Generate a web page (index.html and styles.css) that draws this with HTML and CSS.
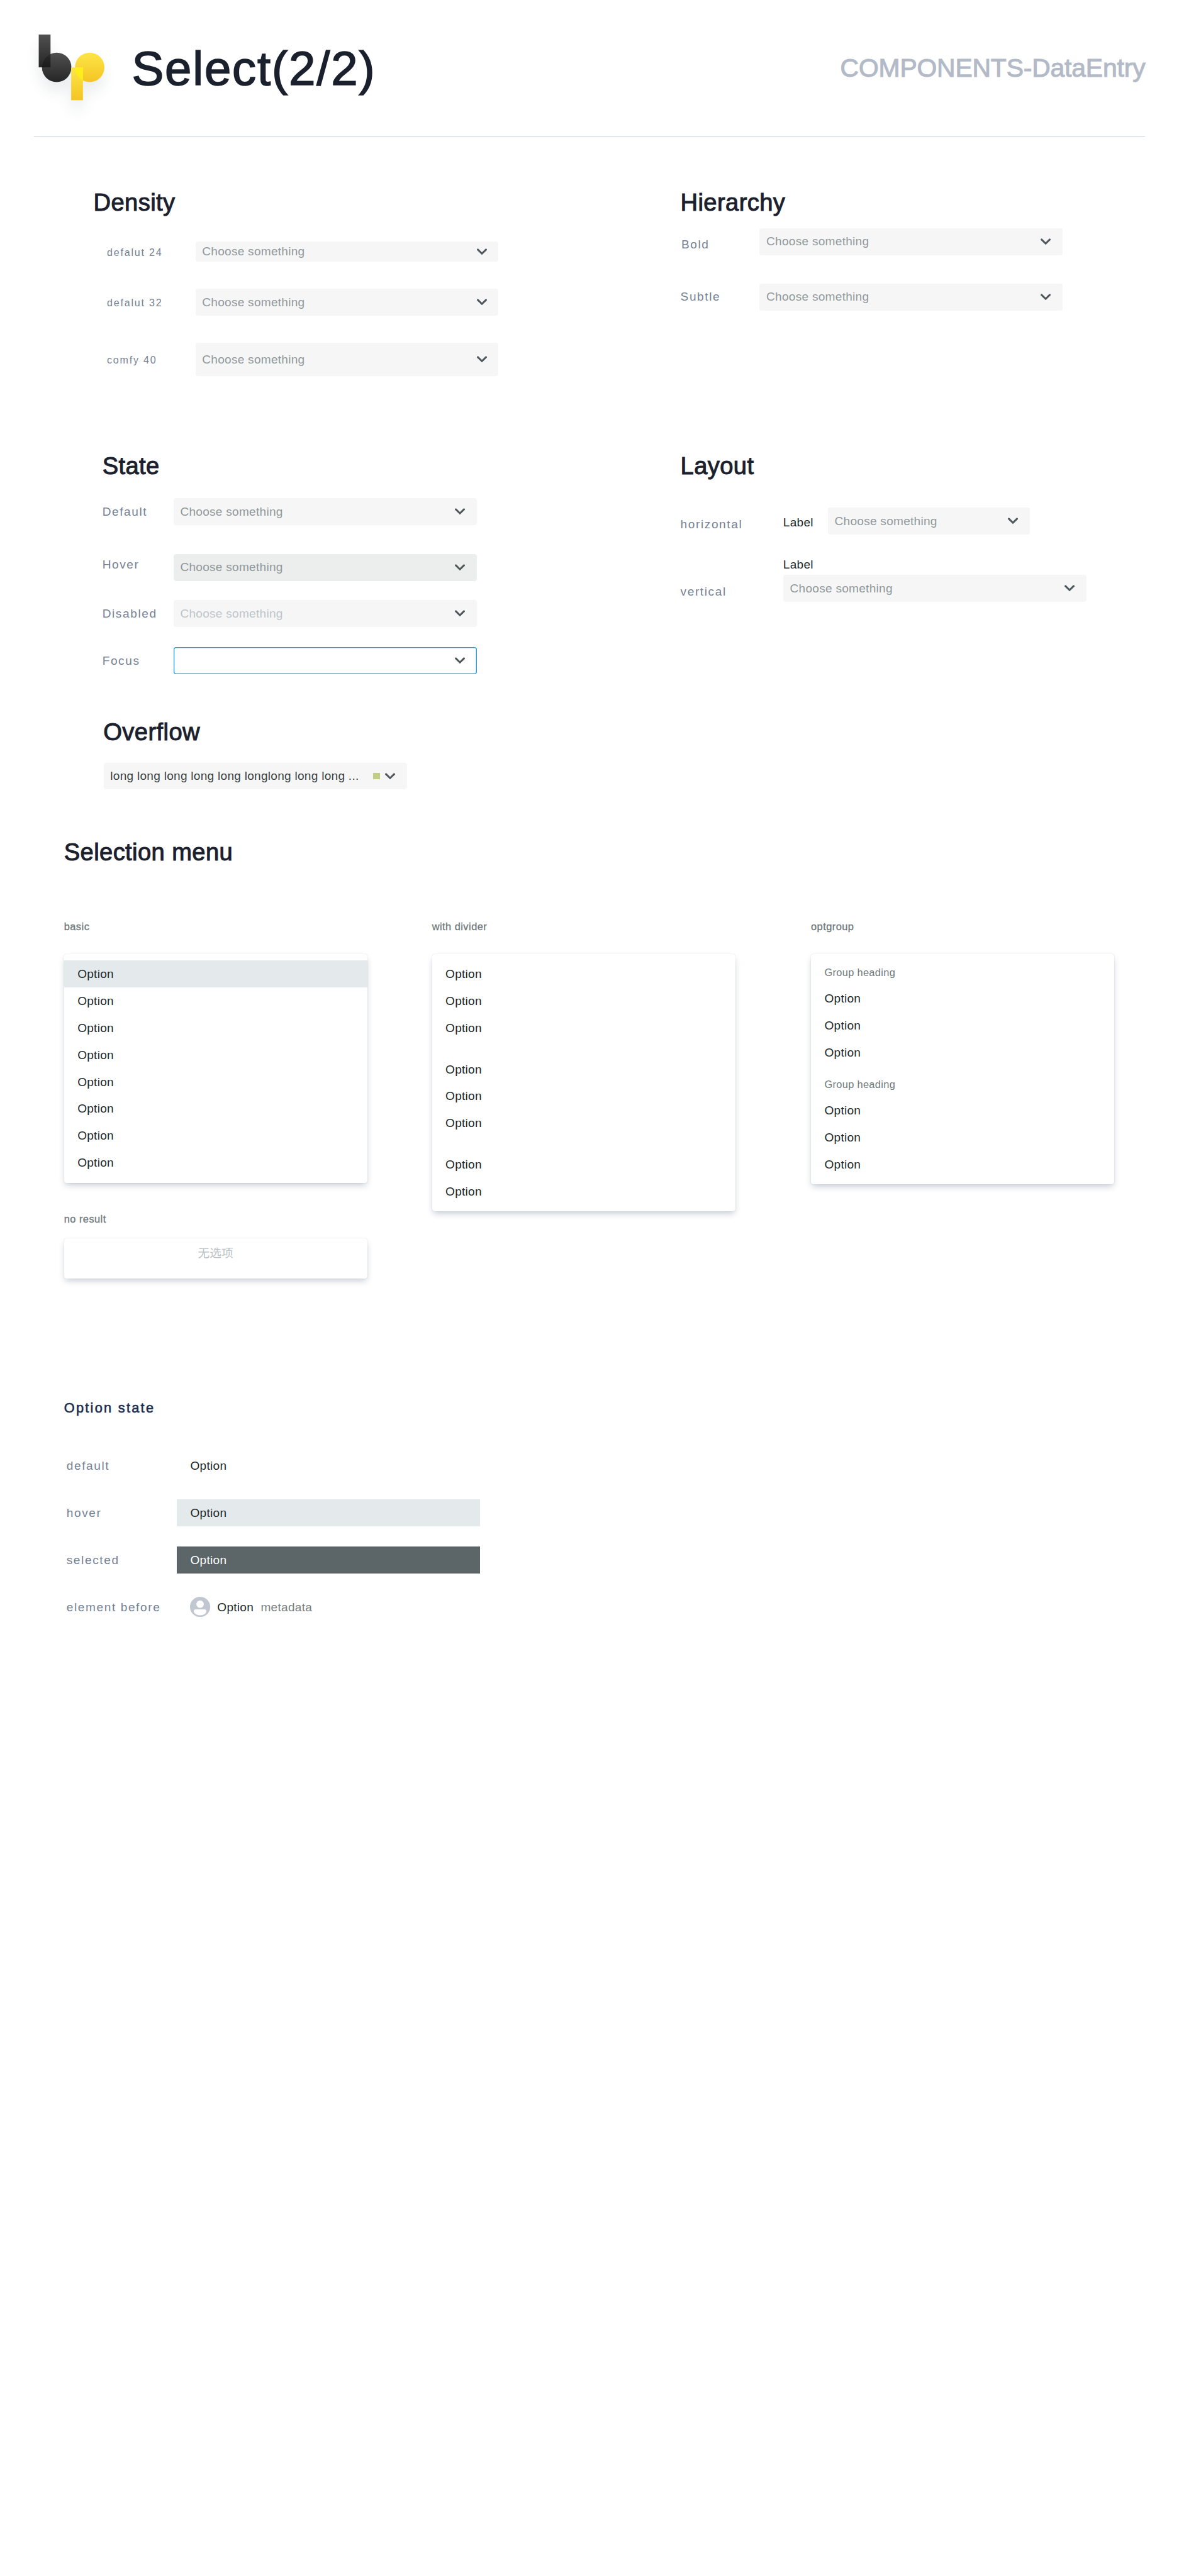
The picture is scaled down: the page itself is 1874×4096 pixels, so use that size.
FILE: index.html
```html
<!DOCTYPE html>
<html lang="en">
<head>
<meta charset="utf-8">
<title>Select(2/2)</title>
<link rel="stylesheet" href="styles.css">
</head>
<body>
<svg class="defs" aria-hidden="true">
  <symbol id="chevron" viewBox="0 0 24 16"><path d="M2.3 2.9 L12 12.3 L21.7 2.9" fill="none" stroke="#4f585b" stroke-width="4.5" stroke-linecap="round"/></symbol>
</svg>

<header class="header">
  <svg class="logo" viewBox="0 0 280 280">
    <defs>
      <linearGradient id="dark" x1="0" y1="0" x2="0" y2="1"><stop offset="0" stop-color="#505050"/><stop offset="1" stop-color="#262626"/></linearGradient>
      <linearGradient id="gold" x1="0" y1="0" x2="0" y2="1"><stop offset="0" stop-color="#fee548"/><stop offset="1" stop-color="#f4c522"/></linearGradient>
      <linearGradient id="darkOver" x1="0" y1="125" x2="0" y2="160" gradientUnits="userSpaceOnUse"><stop offset="0" stop-color="#2c2c2c"/><stop offset="1" stop-color="#1a1a1a"/></linearGradient>
      <linearGradient id="goldOver" x1="0" y1="160" x2="0" y2="192" gradientUnits="userSpaceOnUse"><stop offset="0" stop-color="#fff01e"/><stop offset="1" stop-color="#fdea18"/></linearGradient>
      <clipPath id="darkCircle"><circle cx="134.6" cy="160" r="35"/></clipPath>
      <clipPath id="goldCircle"><circle cx="213" cy="160" r="35"/></clipPath>
      <filter id="soft" x="-50%" y="-50%" width="200%" height="200%"><feGaussianBlur stdDeviation="17"/></filter>
    </defs>
    <g fill="#28344b" opacity=".085" filter="url(#soft)" transform="translate(0 24)">
      <rect x="92" y="82" width="28" height="78"/><circle cx="134.6" cy="160" r="35"/>
      <circle cx="213" cy="160" r="35"/><rect x="169" y="160" width="28" height="78"/>
    </g>
    <rect x="92" y="82" width="28" height="78" fill="url(#dark)"/>
    <circle cx="134.6" cy="160" r="35" fill="url(#dark)"/>
    <rect x="92" y="82" width="28" height="78" fill="url(#darkOver)" clip-path="url(#darkCircle)"/>
    <circle cx="213" cy="160" r="35" fill="url(#gold)"/>
    <rect x="169" y="160" width="28" height="78" fill="url(#gold)"/>
    <rect x="169" y="160" width="28" height="78" fill="url(#goldOver)" clip-path="url(#goldCircle)"/>
  </svg>
  <h1 class="title">Select(2/2)</h1>
  <p class="category">COMPONENTS-DataEntry</p>
</header>

<main>
  <div class="board board-first">
    <section class="density">
      <h2>Density</h2>
      <div class="row"><span class="tag">defalut 24</span><div class="select compact">Choose something<svg class="chevron"><use href="#chevron"/></svg></div></div>
      <div class="row"><span class="tag">defalut 32</span><div class="select">Choose something<svg class="chevron"><use href="#chevron"/></svg></div></div>
      <div class="row"><span class="tag">comfy 40</span><div class="select comfy">Choose something<svg class="chevron"><use href="#chevron"/></svg></div></div>
    </section>
    <section class="hierarchy">
      <h2>Hierarchy</h2>
      <div class="row"><span class="tag low">Bold</span><div class="select">Choose something<svg class="chevron"><use href="#chevron"/></svg></div></div>
      <div class="row"><span class="tag">Subtle</span><div class="select">Choose something<svg class="chevron"><use href="#chevron"/></svg></div></div>
    </section>
  </div>

  <div class="board board-second">
    <section class="state">
      <h2>State</h2>
      <div class="row row-default"><span class="tag">Default</span><div class="select">Choose something<svg class="chevron"><use href="#chevron"/></svg></div></div>
      <div class="row row-hover"><span class="tag">Hover</span><div class="select hovered">Choose something<svg class="chevron"><use href="#chevron"/></svg></div></div>
      <div class="row row-disabled"><span class="tag">Disabled</span><div class="select disabled">Choose something<svg class="chevron"><use href="#chevron"/></svg></div></div>
      <div class="row row-focus"><span class="tag">Focus</span><div class="select focused"><svg class="chevron"><use href="#chevron"/></svg></div></div>
      <h2 class="overflow-title">Overflow</h2>
      <div class="select filled"><span>long long long long long longlong long long ...</span><i class="marker"></i><svg class="chevron"><use href="#chevron"/></svg></div>
    </section>
    <section class="layout">
      <h2>Layout</h2>
      <div class="row horizontal"><span class="tag low">horizontal</span><span class="label">Label</span><div class="select short">Choose something<svg class="chevron"><use href="#chevron"/></svg></div></div>
      <div class="row vertical"><span class="tag low">vertical</span><div class="field"><span class="label">Label</span><div class="select">Choose something<svg class="chevron"><use href="#chevron"/></svg></div></div></div>
    </section>
  </div>

  <section class="menus">
    <h2>Selection menu</h2>
    <div class="menu-columns">
      <div>
        <h3 class="caption">basic</h3>
        <ul class="menu"><li class="active">Option</li><li>Option</li><li>Option</li><li>Option</li><li>Option</li><li>Option</li><li>Option</li><li>Option</li></ul>
        <h3 class="caption caption-empty">no result</h3>
        <div class="menu empty" lang="zh-CN">无选项</div>
      </div>
      <div>
        <h3 class="caption">with divider</h3>
        <ul class="menu"><li>Option</li><li>Option</li><li>Option</li><li class="divided">Option</li><li>Option</li><li>Option</li><li class="divided">Option</li><li>Option</li></ul>
      </div>
      <div>
        <h3 class="caption">optgroup</h3>
        <ul class="menu"><li class="group">Group heading</li><li>Option</li><li>Option</li><li>Option</li><li class="group">Group heading</li><li>Option</li><li>Option</li><li>Option</li></ul>
      </div>
    </div>
  </section>

  <section class="option-state">
    <h3 class="subtitle">Option state</h3>
    <div class="option-rows">
      <div class="row"><span class="tag">default</span><div class="option"><span>Option</span></div></div>
      <div class="row"><span class="tag">hover</span><div class="option option-hover"><span>Option</span></div></div>
      <div class="row"><span class="tag">selected</span><div class="option option-selected"><span>Option</span></div></div>
      <div class="row"><span class="tag">element before</span><div class="option">
        <svg class="avatar" viewBox="0 0 48 48"><circle cx="24" cy="24" r="24" fill="#c1c7d0"/><circle cx="24" cy="17.5" r="8.8" fill="#fff"/><path d="M9 34.5 Q9 30 13.5 30 H34.5 Q39 30 39 34.5 C39 40 32 44 24 44 S9 40 9 34.5Z" fill="#fff"/></svg>
        <span>Option</span><span class="metadata">metadata</span></div></div>
    </div>
  </section>
</main>
</body>
</html>
```
FILE: styles.css
```css
/* The sheet is 28rem wide and always spans the window. */
html { font-size: calc(100vw / 28); }
* { box-sizing: border-box; margin: 0; padding: 0; }
body {
  width: 28rem;
  height: 61.2rem;
  overflow: hidden;
  background: #fff;
  color: #20282a;
  font-family: "Liberation Sans", "Noto Sans CJK SC", sans-serif;
  font-size: .285rem;
  letter-spacing: .004rem;
}
.defs { display: none; }
ul { list-style: none; }

.header {
  display: flex;
  align-items: center;
  height: 3.24rem;
  margin: 0 .8rem;
  border-bottom: .02rem solid #c4cbd1;
}
.logo { flex: none; width: 2.8rem; height: 2.8rem; margin: -.44rem 0 0 -.8rem; overflow: visible; }
.title {
  margin-left: .33rem;
  padding-top: .03rem;
  color: #1b202d;
  font-size: 1.14rem;
  font-weight: 400;
  letter-spacing: .026rem;
  -webkit-text-stroke: .024rem #1b202d;
}
.category {
  margin-left: auto;
  padding-top: .02rem;
  color: #b3bac7;
  font-size: .61rem;
  letter-spacing: -.002rem;
  -webkit-text-stroke: .016rem #b3bac7;
}

h2 {
  height: .8rem;
  line-height: .83rem;
  color: #1b202d;
  font-size: .57rem;
  font-weight: 400;
  letter-spacing: .006rem;
  -webkit-text-stroke: .015rem #1b202d;
}

.board { display: grid; grid-template-columns: 16.16rem 1fr; }
.board-first { padding-top: 1.16rem; height: 7.42rem; }
.board-second { height: 8.1rem; }
.row { display: flex; align-items: center; }
.tag { flex: none; color: #758195; letter-spacing: .024rem; white-space: nowrap; }
.tag.low { padding-top: .16rem; }

.select {
  display: flex;
  flex: none;
  align-items: center;
  width: 7.2rem;
  height: .64rem;
  padding: 0 .28rem 0 .16rem;
  border-radius: .06rem;
  background: #f6f6f6;
  color: #90999b;
  white-space: nowrap;
}
.chevron { flex: none; width: .24rem; height: .16rem; margin-left: auto; overflow: visible; }
.compact { height: .48rem; }
.comfy { height: .8rem; }
.short { width: 4.8rem; }
.hovered { background: #ebeeed; }
.disabled { color: #bec6c9; }
.focused { background: #fff; box-shadow: inset 0 0 0 .02rem #1f9dda; }
.filled { margin: .34rem 0 0 .03rem; color: #3a4345; }
.marker { width: .16rem; height: .14rem; margin-left: auto; background: #c2cd86; }
.filled .chevron { margin-left: .12rem; }

.density { padding-left: 2.22rem; }
.density .row { margin-top: .64rem; padding-left: .32rem; }
.density h2 + .row { margin-top: .54rem; }
.density .tag { width: 2.1rem; padding-top: .03rem; font-size: .24rem; letter-spacing: .027rem; }

.hierarchy .tag { width: 1.88rem; }
.hierarchy .low { padding-left: .02rem; }
.hierarchy .row { margin-top: .68rem; }
.hierarchy h2 + .row { margin-top: .22rem; }

.state { padding-left: 2.43rem; }
.state .tag { width: 1.69rem; }
.row-default { margin-top: .38rem; }
.row-hover { margin-top: .68rem; }
.row-hover .tag { padding-bottom: .12rem; }
.row-disabled { margin-top: .46rem; }
.row-focus { margin-top: .48rem; }
.overflow-title { margin-top: .96rem; padding-left: .025rem; }

.layout .tag { width: 2.44rem; }
.label { color: #20282a; line-height: .4rem; }
.horizontal { margin-top: .6rem; }
.horizontal .label { width: 1.06rem; padding-top: .08rem; }
.vertical { margin-top: .52rem; align-items: flex-end; }
.vertical .tag { height: .64rem; line-height: .48rem; }
.field { display: flex; flex-direction: column; gap: .04rem; }

.menus { margin-top: 1.06rem; padding-left: 1.52rem; }
.menu-columns { display: grid; grid-template-columns: 8.74rem 9rem 7.2rem; height: 8.56rem; margin-top: 1.2rem; }
.caption, .group { color: #6f797b; font-size: .245rem; font-weight: 400; letter-spacing: .007rem; }
.caption { height: .84rem; line-height: .4rem; -webkit-text-stroke: .005rem #6f797b; }
.caption-empty { height: .66rem; margin-top: .66rem; }
.menu {
  width: 7.2rem;
  padding: .16rem 0;
  border-radius: .06rem;
  background: #fff;
  box-shadow: 0 .08rem .16rem -.04rem rgba(9, 30, 66, .25), 0 0 .02rem rgba(9, 30, 66, .2);
}
.menu li { height: .64rem; padding-left: .32rem; line-height: .67rem; }
.menu .active { background: #e4eaec; }
.menu .divided { margin-top: .34rem; }
.menu .group { height: .58rem; line-height: .57rem; letter-spacing: .005rem; }
.menu li + .group { margin-top: .16rem; }
.empty { height: .96rem; color: #bcc3c7; font-size: .28rem; letter-spacing: 0; line-height: .4rem; text-align: center; }

.option-state { margin-top: 2.83rem; }
.subtitle {
  height: .48rem;
  padding-left: 1.52rem;
  color: #1b2d50;
  font-size: .325rem;
  font-weight: 400;
  letter-spacing: .034rem;
  line-height: .48rem;
  -webkit-text-stroke: .009rem #1b2d50;
}
.option-rows { display: grid; gap: .48rem; margin-top: .81rem; padding-left: 1.58rem; }
.option-rows .tag { width: 2.62rem; padding-top: .02rem; }
.option { display: flex; align-items: center; width: 7.2rem; height: .64rem; padding-left: .32rem; }
.option span { padding-top: .02rem; }
.option-hover { background: #e4eaec; }
.option-selected { background: #5c6567; color: #fff; }
.avatar { width: .48rem; height: .48rem; margin-right: .16rem; }
.option .metadata { margin-left: .17rem; color: #79807f; }
```
